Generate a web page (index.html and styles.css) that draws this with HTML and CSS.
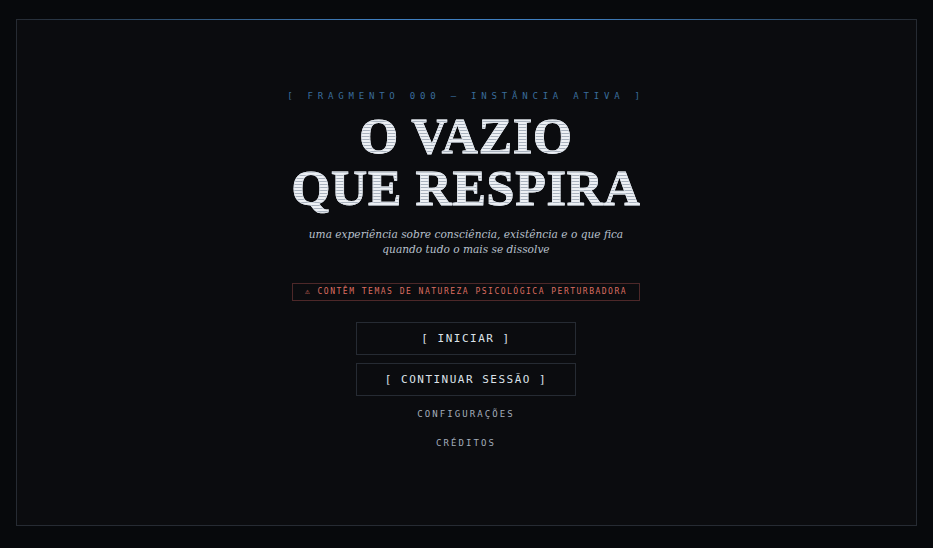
FILE: index.html
```html
<!DOCTYPE html>
<html lang="pt">
<head>
<meta charset="utf-8">
<title>O Vazio que Respira</title>
<link rel="stylesheet" href="styles.css">
</head>
<body>
<div class="screen">
  <main class="frame">
    <div class="glow"></div>
    <div class="content">
      <p class="tag">[ FRAGMENTO 000 — INSTÂNCIA ATIVA ]</p>
      <h1 class="title">O VAZIO<br>QUE RESPIRA</h1>
      <p class="sub">uma experiência sobre consciência, existência e o que fica<br>quando tudo o mais se dissolve</p>
      <p class="warn">⚠ CONTÊM TEMAS DE NATUREZA PSICOLÓGICA PERTURBADORA</p>
      <nav class="menu">
        <button class="btn">[ INICIAR ]</button>
        <button class="btn">[ CONTINUAR SESSÃO ]</button>
        <a class="link link-first">CONFIGURAÇÕES</a>
        <a class="link">CRÉDITOS</a>
      </nav>
    </div>
  </main>
</div>
</body>
</html>
```
FILE: styles.css
```css
html, body {
  margin: 0;
  padding: 0;
  height: 100%;
}
body {
  background: #07090c;
}
.screen {
  box-sizing: border-box;
  height: 548px;
  padding: 19px 16px 22px 16px;
}
.frame {
  position: relative;
  box-sizing: border-box;
  height: 100%;
  border: 1px solid #262b33;
  border-top-color: transparent;
  background: #0b0c0f;
  display: flex;
  align-items: center;
  justify-content: center;
}
.glow {
  position: absolute;
  left: -1px;
  right: -1px;
  top: -1px;
  height: 1px;
  background: linear-gradient(90deg, #262b33 0%, #2f5478 18%, #3f7fc0 40%, #3f7fc0 62%, #2f5478 84%, #262b33 100%);
}
.content {
  display: flex;
  flex-direction: column;
  align-items: center;
  margin-top: -6px;
  margin-left: -1px;
}
.tag {
  margin: 0;
  font-family: "DejaVu Sans Mono", monospace;
  font-size: 9px;
  letter-spacing: 4.8px;
  color: #3a6c9c;
  line-height: 12px;
}
.title {
  margin: 8px 0 0 0;
  font-family: "Liberation Serif", serif;
  font-weight: bold;
  font-size: 50px;
  line-height: 52px;
  letter-spacing: 0.8px;
  text-align: center;
  background: repeating-linear-gradient(180deg, #eef1f5 0px, #eef1f5 2px, #a9b2be 2px, #a9b2be 3px);
  -webkit-background-clip: text;
  background-clip: text;
  color: transparent;
  -webkit-text-stroke: 0.8px rgba(225, 230, 237, 0.85);
}
.sub {
  margin: 13px 0 0 0;
  font-family: "DejaVu Serif", serif;
  font-style: italic;
  font-size: 10.6px;
  line-height: 15px;
  color: #b8c0cc;
  text-align: center;
}
.warn {
  margin: 26px 0 0 0;
  box-sizing: border-box;
  width: 348px;
  height: 18px;
  border: 1px solid #4d2829;
  font-family: "DejaVu Sans Mono", monospace;
  font-size: 8px;
  letter-spacing: 1.5px;
  line-height: 16px;
  color: #dc6d60;
  text-align: center;
}
.menu {
  margin-top: 21px;
  display: flex;
  flex-direction: column;
  align-items: center;
}
.btn {
  box-sizing: border-box;
  width: 220px;
  height: 33px;
  margin-bottom: 8px;
  background: transparent;
  border: 1px solid #262b33;
  font-family: "DejaVu Sans Mono", monospace;
  font-size: 11px;
  letter-spacing: 1.5px;
  color: #dde2e9;
  padding: 0;
}
.link {
  font-family: "DejaVu Sans Mono", monospace;
  font-size: 9px;
  letter-spacing: 2.1px;
  color: #a3adba;
  line-height: 12px;
  margin-top: 17px;
}
.link-first {
  margin-top: 4px;
}
```
